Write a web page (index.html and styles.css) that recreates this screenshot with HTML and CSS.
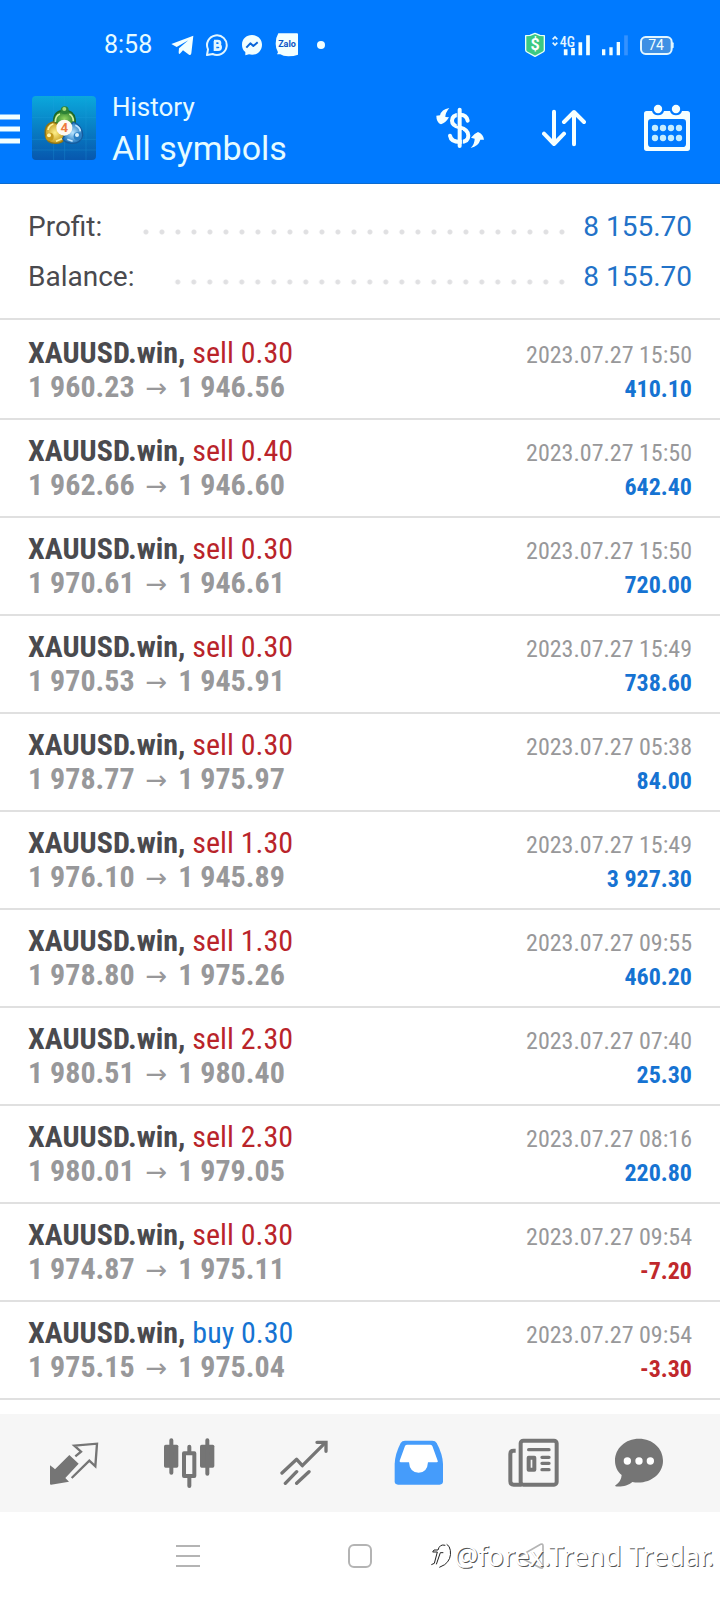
FILE: index.html
```html
<!DOCTYPE html>
<html lang="en">
<head>
<meta charset="utf-8">
<meta name="viewport" content="width=device-width, initial-scale=1">
<title>History</title>
<link rel="stylesheet" href="styles.css">
</head>
<body>
<header class="header">
  <div class="status">
    <div class="status-left">
      <span class="clock">8:58</span>
      <svg width="24" height="24" viewBox="510 99 72 72"><path fill="#f2ffff" d="M514 132 580 107 574 160Q573 167 567 164L549 151 541 160Q536 165 536 157L537 145 565 121 530 141Z"/></svg>
      <svg class="g10" width="24" height="24" viewBox="615 99 72 72"><path fill="none" stroke="#e2f6ff" stroke-width="6" d="M621 165 624 148A29.500 29.500 0 1 1 638 162Z" stroke-linejoin="round"/><path fill="none" stroke="#e2f6ff" stroke-width="8" d="M645 123V149H655Q662 149 662 142 662 136 655 136H644M655 136Q660 135 660 129 660 123 653 123H642"/></svg>
      <svg class="g13" width="22" height="24" viewBox="724 99 66 72"><path fill="#f2ffff" d="M757 105C740 105 727 117 727 134Q727 148 737 156V166L748 163C770 169 787 153 787 134 787 117 774 105 757 105Z"/><path fill="none" stroke="#0a66d8" stroke-width="6" stroke-linejoin="round" d="M740 143 752 130 761 138 774 127"/></svg>
      <svg class="g13" width="24" height="24" viewBox="828 98 72 72"><path fill="#f2ffff" d="M838 99H894Q897 99 897 102V163Q885 168 868 168 852 168 844 162L834 162 837 156Q830 145 830 130 830 112 838 99Z"/><text x="864" y="141" text-anchor="middle" class="zalo">Zalo</text></svg>
      <i class="dot"></i>
    </div>
    <div class="status-right">
      <svg width="22" height="26" viewBox="495 96 66 78"><path fill="#3cc983" stroke="#e8fff8" stroke-width="4" stroke-linejoin="round" d="M528 100 543 106 556 107V150Q556 154 552 156L528 169 504 156Q500 154 500 150V107L513 106Z"/><text x="528" y="151" text-anchor="middle" class="cash">$</text></svg>
      <svg width="40" height="24" viewBox="573 98 120 72"><path fill="none" stroke="#e2f6ff" stroke-width="5" d="M578 117 585 110 592 117M578 127 585 134 592 127"/><text x="599" y="139" class="net">4G</text><path stroke="#f2ffff" stroke-width="11" stroke-linecap="butt" d="M617 147V165M639 143V165M661 126V165M684 105V165"/></svg>
      <svg width="28" height="24" viewBox="723 98 84 72"><path stroke="#f2ffff" stroke-width="10" d="M731 147V165M753 141V165M775 125V165"/><path stroke="#3492ff" stroke-width="11" d="M798 105V165"/></svg>
      <svg width="36" height="24" viewBox="837 98 108 72"><rect x="843" y="110" width="92" height="51" rx="14" fill="#3e90e4" stroke="#e2f6ff" stroke-width="6"/><path stroke="#e2f6ff" stroke-width="6" stroke-linecap="round" d="M938 129V141"/><text x="888" y="150" text-anchor="middle" class="charge">74</text></svg>
    </div>
  </div>
  <div class="appbar">
    <button class="menu" aria-label="Menu"><svg width="20" height="30" viewBox="0 0 20 30"><path stroke="#f2ffff" stroke-width="5" d="M0 3H20M0 15H20M0 27H20"/></svg></button>
    <svg class="logo" width="64" height="64" viewBox="0 0 192 192">
      <defs>
        <linearGradient id="bg" x1="0" y1="0" x2="0" y2="1"><stop offset="0" stop-color="#0ba8dc"/><stop offset=".5" stop-color="#087fc4"/><stop offset="1" stop-color="#0757ae"/></linearGradient>
        <radialGradient id="gr"><stop offset="0" stop-color="#8fd45f"/><stop offset="1" stop-color="#267a2c"/></radialGradient>
        <radialGradient id="ye"><stop offset="0" stop-color="#fff08a"/><stop offset="1" stop-color="#c49a1c"/></radialGradient>
        <radialGradient id="bl"><stop offset="0" stop-color="#b8e4ff"/><stop offset="1" stop-color="#2277be"/></radialGradient>
      </defs>
      <rect width="192" height="192" rx="12" fill="url(#bg)"/>
      <path stroke="#22a4df" stroke-width="2" opacity=".4" d="M0 64H192M0 130H192M0 162H192M65 0V192M98 0V192M162 0V192"/>
      <path fill="url(#gr)" stroke="#1d6528" stroke-width="4" d="M65 84Q62 48 88 44H108Q132 50 130 84L112 92H82Z"/>
      <path fill="url(#ye)" stroke="#8f7415" stroke-width="4" d="M64 78Q36 84 40 118 44 142 70 142 92 142 98 128L78 86Z"/>
      <path fill="url(#bl)" stroke="#155b9d" stroke-width="4" d="M124 78Q152 90 152 118 146 144 118 142 98 140 92 128L116 88Z"/>
      <path fill="none" stroke="#d4f0a0" stroke-width="5" d="M70 78Q70 58 84 54M112 54Q124 60 124 76"/>
      <path fill="none" stroke="#fff3a0" stroke-width="5" d="M48 102Q50 88 64 84M72 136 90 128"/>
      <path fill="none" stroke="#c4e8ff" stroke-width="5" d="M130 88Q144 94 145 106M106 130 122 136"/>
      <circle cx="98" cy="43" r="12" fill="#2d8236"/><circle cx="97" cy="39" r="6" fill="#a9dd7c"/>
      <circle cx="53" cy="122" r="12" fill="#c49a1c"/><circle cx="51" cy="118" r="6" fill="#fff6ae"/>
      <circle cx="137" cy="121" r="12" fill="#2a7fc4"/><circle cx="135" cy="117" r="6" fill="#d8f1ff"/>
      <circle cx="97" cy="95" r="24" fill="#fffaf0"/><text x="97" y="109" text-anchor="middle" class="four">4</text>
    </svg>
    <div class="titles"><span class="sub">History</span><h1 class="title">All symbols</h1></div>
    <div class="actions">
      <button aria-label="Profit currency"><svg width="48" height="42" viewBox="228 321 144 126"><g fill="none" stroke="#f5ffff" stroke-width="12" stroke-linecap="round"><path d="M323 362Q320 344 300 344 276 344 276 362 276 377 299 382 325 388 325 407 325 426 300 426 273 426 270 407"/></g><path stroke="#007aff" stroke-width="3" d="M292 335V378M307 390V435"/><path stroke="#f5ffff" stroke-width="12" stroke-linecap="round" d="M299 329V438"/><path fill="#f5ffff" d="M268 324Q244 328 240 346L229 347Q229 367 243 373 257 369 267 352L256 351Q256 338 268 324ZM332 444Q356 438 361 419L372 419Q370 402 354 396 340 402 333 413L344 416Q344 432 332 444Z"/></svg></button>
      <button aria-label="Sort"><svg width="44" height="38" viewBox="546 327 132 114"><path fill="none" stroke="#f5ffff" stroke-width="12" stroke-linecap="round" stroke-linejoin="round" d="M582 335V432M552 401 582 432 612 401M642 433V336M612 366 642 336 672 366"/></svg></button>
      <button aria-label="Select period"><svg width="46" height="48" viewBox="852 309 138 144"><path fill="#f5ffff" fill-rule="evenodd" d="M860 330H876Q880 343 894 343 908 343 912 330H930Q934 343 948 343 962 343 966 330H982Q990 330 990 338V442Q990 450 982 450H860Q852 450 852 442V338Q852 330 860 330ZM874 354Q864 354 864 364V428Q864 438 874 438H968Q978 438 978 428V364Q978 354 968 354Z"/><g fill="#f5ffff"><circle cx="894" cy="324" r="12.500"/><circle cx="948" cy="324" r="12.500"/></g><path stroke="#c4edff" stroke-width="19" stroke-linecap="round" stroke-dasharray="0 24" d="M885 381H958M885 411H958"/></svg></button>
    </div>
  </div>
</header>
<main>
  <dl class="summary">
    <div class="total"><dt>Profit:</dt><dd>8 155.70</dd></div>
    <div class="total"><dt>Balance:</dt><dd>8 155.70</dd></div>
  </dl>
  <ul class="deals">
    <li><p><b>XAUUSD.win, <span class="sell">sell 0.30</span></b><time>2023.07.27 15:50</time></p><p><span class="price">1 960.23 <i>→</i> 1 946.56</span><strong class="gain">410.10</strong></p></li>
    <li><p><b>XAUUSD.win, <span class="sell">sell 0.40</span></b><time>2023.07.27 15:50</time></p><p><span class="price">1 962.66 <i>→</i> 1 946.60</span><strong class="gain">642.40</strong></p></li>
    <li><p><b>XAUUSD.win, <span class="sell">sell 0.30</span></b><time>2023.07.27 15:50</time></p><p><span class="price">1 970.61 <i>→</i> 1 946.61</span><strong class="gain">720.00</strong></p></li>
    <li><p><b>XAUUSD.win, <span class="sell">sell 0.30</span></b><time>2023.07.27 15:49</time></p><p><span class="price">1 970.53 <i>→</i> 1 945.91</span><strong class="gain">738.60</strong></p></li>
    <li><p><b>XAUUSD.win, <span class="sell">sell 0.30</span></b><time>2023.07.27 05:38</time></p><p><span class="price">1 978.77 <i>→</i> 1 975.97</span><strong class="gain">84.00</strong></p></li>
    <li><p><b>XAUUSD.win, <span class="sell">sell 1.30</span></b><time>2023.07.27 15:49</time></p><p><span class="price">1 976.10 <i>→</i> 1 945.89</span><strong class="gain">3 927.30</strong></p></li>
    <li><p><b>XAUUSD.win, <span class="sell">sell 1.30</span></b><time>2023.07.27 09:55</time></p><p><span class="price">1 978.80 <i>→</i> 1 975.26</span><strong class="gain">460.20</strong></p></li>
    <li><p><b>XAUUSD.win, <span class="sell">sell 2.30</span></b><time>2023.07.27 07:40</time></p><p><span class="price">1 980.51 <i>→</i> 1 980.40</span><strong class="gain">25.30</strong></p></li>
    <li><p><b>XAUUSD.win, <span class="sell">sell 2.30</span></b><time>2023.07.27 08:16</time></p><p><span class="price">1 980.01 <i>→</i> 1 979.05</span><strong class="gain">220.80</strong></p></li>
    <li><p><b>XAUUSD.win, <span class="sell">sell 0.30</span></b><time>2023.07.27 09:54</time></p><p><span class="price">1 974.87 <i>→</i> 1 975.11</span><strong class="loss">-7.20</strong></p></li>
    <li><p><b>XAUUSD.win, <span class="buy">buy 0.30</span></b><time>2023.07.27 09:54</time></p><p><span class="price">1 975.15 <i>→</i> 1 975.04</span><strong class="loss">-3.30</strong></p></li>
  </ul>
</main>
<nav class="tabs">
  <button aria-label="Quotes"><svg width="50" height="50" viewBox="146 112 150 150"><path fill="#757575" d="M149 194Q160 202 164 206L207 163 235 189 195 232 206 243 152 252Q149 252 149 249Z"/><path fill="none" stroke="#757575" stroke-width="7" d="M225 167 242 153 222 135 290 129 285 197 267 180 214 232"/></svg></button>
  <button aria-label="Charts"><svg width="52" height="50" viewBox="487 112 156 150"><g fill="#757575"><rect x="490" y="132" width="43" height="69" rx="5"/><rect x="598" y="132" width="43" height="69" rx="5"/></g><path stroke="#757575" stroke-width="12" stroke-linecap="round" d="M512 119V216M620 119V219M566 138V155M566 231V256"/><rect x="550" y="158" width="31" height="68" fill="#f6f6f6" stroke="#757575" stroke-width="12" stroke-linejoin="round"/></svg></button>
  <button aria-label="Trade"><svg width="48" height="50" viewBox="837 112 144 150"><path fill="none" stroke="#757575" stroke-width="10" stroke-linecap="round" stroke-linejoin="round" d="M843 217 887 176 904 195 973 126M853 248 887 213M887 248 924 213"/><path fill="none" stroke="#757575" stroke-width="10" d="M948 125H975V152" stroke-linecap="round"/></svg></button>
  <button aria-label="History"><svg width="50" height="50" viewBox="101 112 150 150"><path fill="#459cfb" d="M134 120H216Q225 120 229 127 247 160 248 190V242Q248 252 238 252H113Q103 252 103 242V190Q104 160 121 127 125 120 134 120Z"/><path fill="#fff" d="M141 132H209Q214 132 216 136L232 180Q234 185 229 185H203Q201 216 175 216 148 216 146 185H122Q117 185 118 180L134 136Q136 132 141 132Z"/></svg></button>
  <button aria-label="News"><svg width="52" height="50" viewBox="444 112 156 150"><g fill="none" stroke="#757575" stroke-width="12" stroke-linejoin="round"><rect x="482" y="120" width="108" height="132" rx="8" fill="#f6f6f6"/><path d="M467 150H461Q451 150 451 160V242Q451 252 461 252H485"/><rect x="506" y="171" width="17" height="36"/></g><path stroke="#757575" stroke-width="10" stroke-linecap="round" d="M506 147H567M546 170H567M546 188H567M546 207H567"/></svg></button>
  <button aria-label="Messages"><svg width="50" height="50" viewBox="762 112 150 150"><path fill="#757575" d="M837 114C796 114 765 143 765 180C765 198 773 213 785 223Q784 243 765 255C771 261 804 257 817 244C868 253 909 221 909 180C909 143 878 114 837 114Z"/><g fill="#fff"><circle cx="802" cy="181" r="11"/><circle cx="837" cy="181" r="11"/><circle cx="871" cy="181" r="11"/></g></svg></button>
</nav>
<footer class="system">
  <button aria-label="Recent apps"><svg width="24" height="24" viewBox="0 0 24 24"><path stroke="#b4b4b4" stroke-width="2" d="M0 2H24M0 12H24M0 22H24"/></svg></button>
  <button aria-label="Home"><svg width="24" height="24" viewBox="0 0 24 24"><rect x="1" y="1" width="22" height="22" rx="5" fill="none" stroke="#b4b4b4" stroke-width="2"/></svg></button>
  <button aria-label="Back"><svg width="26" height="26" viewBox="475 429 78 78"><path fill="none" stroke="#b4b4b4" stroke-width="5" stroke-linejoin="round" d="M480 467Q477 470 480 473L540 504Q547 506 547 498V438Q547 430 540 433Z"/></svg></button>
  <div class="watermark"><svg width="24" height="30" viewBox="216 435 72 90"><path fill="none" stroke="#222" stroke-width="3" d="M220 506 229 502 238 468H224L228 462H240Q245 443 262 448M244 514 260 506Q281 490 277 463 275 449 266 445M235 505 247 470H256"/></svg><span>@forex.Trend Tredar.</span></div>
</footer>
</body>
</html>
```

FILE: styles.css
```css
* { box-sizing: border-box; }
body {
  margin: 0;
  background: #fff;
  font-family: Roboto, "Liberation Sans", sans-serif;
  color: #4a4a4e;
}
button { border: 0; padding: 0; background: none; display: flex; }
svg { display: block; flex: none; }
p, ul, dl, dd, h1 { margin: 0; padding: 0; }

.header { background: #007aff; color: #e6fbff; border-bottom: 1px solid #0b6bd0; }
.status {
  display: flex;
  justify-content: space-between;
  align-items: center;
  height: 72px;
  padding: 18px 45px 0 104px;
}
.status-left, .status-right { display: flex; align-items: center; }
.status-right { gap: 10px; }
.status-right svg:first-child { margin-right: -5px; }
.clock { font-size: 25px; line-height: 28px; width: 66px; }
.g10 { margin-left: 11px; }
.g13 { margin-left: 12px; }
.dot { width: 8px; height: 8px; border-radius: 50%; background: #f2ffff; margin-left: 18px; }
.zalo { font: bold 27px Roboto, sans-serif; fill: #0a55c4; }
.cash { font: bold 48px Roboto, sans-serif; fill: #fff; }
.net { font: 500 42px "Roboto Condensed", Roboto, sans-serif; fill: #e2f6ff; }
.charge { font: 42px Roboto, sans-serif; fill: #f2ffff; }
.four { font: bold 40px Roboto, sans-serif; fill: #ee7a3c; }

.appbar { display: flex; align-items: center; height: 111px; padding-right: 30px; }
.menu { margin-right: 12px; padding-top: 2px; }
.titles { flex: 1; margin-left: 16px; padding-bottom: 4px; }
.sub { display: block; font-size: 26px; line-height: 44px; }
.title { font-size: 34px; line-height: 38px; font-weight: 400; }
.actions { display: flex; align-items: center; gap: 58px; }

.summary { padding: 18px 28px 16px; border-bottom: 2px solid #e0e0e0; }
.total { display: flex; align-items: center; font-size: 28px; line-height: 50px; }
.total dt { order: 0; }
.total dd { order: 2; color: #2272c8; }
.total::before {
  content: "";
  order: 1;
  flex: 1;
  height: 16px;
  margin: 10px 13px 0 34px;
  background: radial-gradient(circle at center, #e0e0e2 2px, transparent 3px) right center / 16px 16px repeat-x;
}

.deals {
  list-style: none;
  padding-top: 2px;
  margin-bottom: 14px;
  font-family: "Roboto Condensed", "Liberation Sans Narrow", Roboto, sans-serif;
}
.deals li { padding: 14px 28px; border-bottom: 2px solid #e0e0e0; }
.deals p {
  display: flex;
  justify-content: space-between;
  align-items: baseline;
  height: 34px;
  font-size: 30px;
  line-height: 34px;
  white-space: nowrap;
}
.price { color: #98989a; font-weight: 700; }
.price i { font: 26px "DejaVu Sans", sans-serif; line-height: 30px; margin: 0 4px; }
.deals time { font-size: 24px; color: #98989a; }
.deals strong { font-size: 24px; }
.deals span.sell, .deals span.buy { font-weight: 400; }
.sell { color: #b9242a; }
.loss { color: #c0282c; }
.buy, .gain { color: #1673d2; }

.tabs {
  display: grid;
  grid-template-columns: repeat(5, 115fr) 96fr;
  justify-items: center;
  align-items: center;
  height: 98px;
  padding: 0 33px 0 16px;
  background: #f6f6f6;
}
.system {
  position: relative;
  display: grid;
  grid-template-columns: repeat(3, 1fr);
  justify-items: center;
  align-items: center;
  height: 88px;
  padding: 0 102px;
}
.watermark {
  position: absolute;
  right: 6px;
  top: 24px;
  display: flex;
  align-items: center;
  font: 27px/40px "Noto Sans", sans-serif;
  color: #fff;
  text-shadow: 1px 1px 0 #555;
}
```
